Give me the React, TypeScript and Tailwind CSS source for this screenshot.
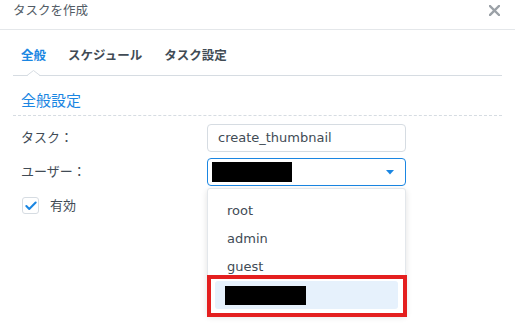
import { Check } from "lucide-react";

const users = ["root", "admin", "guest"];

export default function App() {
  return (
    <div className="relative w-[515px] h-[331px] overflow-hidden bg-white text-[#414b55] font-['DejaVu_Sans','Noto_Sans_CJK_JP',sans-serif]">
      {/* Title bar */}
      <div className="flex items-center justify-between h-[30px] px-[13px] border-b border-[#e4e7ea]">
        <span className="text-[12.5px] leading-none text-[#525c66] -mt-[7px]">タスクを作成</span>
        <svg width="11" height="11" viewBox="0 0 11 11" className="mr-[2px] -mt-[9px]">
          <path d="M1 1 L10 10 M10 1 L1 10" stroke="#9ba1a7" strokeWidth="2.4" strokeLinecap="square" />
        </svg>
      </div>

      {/* Tabs */}
      <div className="relative mx-[13px] h-[46px] border-b border-[#d6dce2] flex items-start gap-[22px] pl-[8px] pt-[18px] text-[12.5px] font-bold leading-[16px]">
        <span className="text-[#1a86e2]">全般</span>
        <span>スケジュール</span>
        <span>タスク設定</span>
        <svg className="absolute left-[14px] -bottom-[1px]" width="13" height="6" viewBox="0 0 13 6">
          <path d="M0 5.5 L6.5 0.5 L13 5.5" fill="white" stroke="#d6dce2" strokeWidth="1" />
          <rect x="1" y="5" width="11" height="1" fill="white" />
        </svg>
      </div>

      {/* Section */}
      <div className="mx-[13px] pl-[8px] pt-[17px] pb-[6px] border-b border-dashed border-[#d6dce2] text-[15px] leading-[16px] text-[#1a86e2]">
        全般設定
      </div>

      {/* Form */}
      <div className="px-[21px] pt-[8px] flex flex-col gap-[6px] text-[13px]">
        <div className="flex items-center">
          <span className="w-[186px]">タスク：</span>
          <div className="w-[199px] h-[28px] border border-[#d6dce2] rounded-[4px] flex items-center pl-[10px] text-[#414b55]">
            create_thumbnail
          </div>
        </div>
        <div className="flex items-center">
          <span className="w-[186px]">ユーザー：</span>
          <div className="w-[199px] h-[28px] border border-[#1a86e2] rounded-[4px] flex items-center justify-between pl-[4px] pr-[11px]">
            <div className="w-[80px] h-[20px] bg-black" />
            <svg width="8" height="5" viewBox="0 0 8 5">
              <path d="M0 0 H8 L4 4.5 Z" fill="#1a86e2" />
            </svg>
          </div>
        </div>
        <div className="flex items-center gap-[11px] mt-[4px] pl-[1px]">
          <div className="w-[17px] h-[17px] border border-[#d6dce2] rounded-[3px] flex items-center justify-center">
            <Check size={14} strokeWidth={3.5} className="text-[#1a86e2]" />
          </div>
          <span>有効</span>
        </div>
      </div>

      {/* Dropdown menu */}
      <div className="absolute left-[207px] top-[188px] w-[199px] h-[127px] bg-white border border-[#e3e7eb] rounded-[3px] shadow-[0_2px_6px_rgba(0,0,0,0.12)] pt-[8px] px-[7px] text-[13px]">
        {users.map((u) => (
          <div key={u} className="h-[28px] flex items-center pl-[12px]">
            {u}
          </div>
        ))}
        <div className="h-[28px] flex items-center pl-[10px] bg-[#e6f1fc] rounded-[3px]">
          <div className="w-[81px] h-[19px] bg-black" />
        </div>
      </div>

      {/* Annotation */}
      <div className="absolute left-[207px] top-[275px] w-[200px] h-[42px] border-4 border-[#e41f1f]" />
    </div>
  );
}
